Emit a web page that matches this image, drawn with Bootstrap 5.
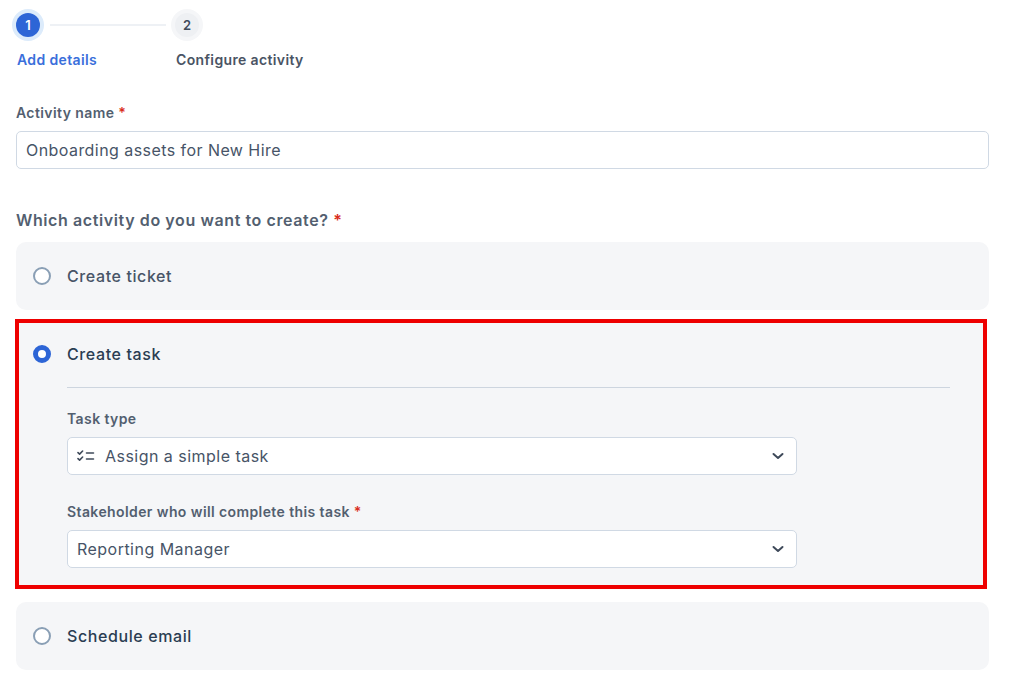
<!DOCTYPE html>
<html lang="en">
<head>
<meta charset="utf-8">
<title>Add details</title>
<link href="https://cdn.jsdelivr.net/npm/bootstrap@5.3.0/dist/css/bootstrap.min.css" rel="stylesheet">
<style>
html,body{height:690px;overflow:hidden}
body{font-family:Inter,"Liberation Sans",sans-serif;color:#475467;background:#fff}
.page-wrap{padding:9px 25px 0 16px}
.step-dot{width:24px;height:24px;border-radius:50%;font-size:13px;font-weight:600;line-height:24px;text-align:center;flex:none}
.step-on{background:#2d65d6;color:#fff;box-shadow:0 0 0 4px #dcebfb}
.step-off{background:#eef0f3;color:#3f4a5a;box-shadow:0 0 0 4px #f5f6f8}
.step-line{height:2px;width:116px;background:#eef1f5;margin:0 9px 0 10px}
.step-head{padding:4px 0 0 0}
.step-labels{margin-top:13px;font-size:14px;font-weight:600;line-height:20px;letter-spacing:.36px}
.lab-a{width:160px;color:#3a6fdb;padding-left:1px}
.lab-b{color:#4a5464}
.fld-head{padding-top:33px}
.fld-label{font-size:14px;font-weight:600;line-height:20px;color:#535f70;margin-bottom:8px;display:block;letter-spacing:.4px}
.fld-star{color:#d92d20}
.fld-input.form-control{height:38px;font-size:16px;color:#475467;border:1.5px solid #d0d9e4;border-radius:5px;padding:0 9px;font-family:inherit;letter-spacing:.44px}
.q-title{font-size:16px;font-weight:600;line-height:24px;color:#535f70;margin:39px 0 10px;letter-spacing:.6px}
.opt-box{background:#f5f6f8;border-radius:10px;height:68px;padding:0 18px;width:973px}
.opt-active{width:972px;height:270px;margin:9px 0 13px -1px;border:4px solid #ee0000;border-radius:0;background:#f5f6f8;padding:0 33px 0 15px}
.opt-radio.form-check-input{width:18px;height:18px;margin:0 16px 0 -1px;flex:none;border:2px solid #8a9fb5;background-color:#fff}
.opt-radio.form-check-input:checked{background-color:#fff;border:5px solid #2d65d6;background-image:none}
.opt-label{font-size:16px;font-weight:500;color:#475467;line-height:24px;letter-spacing:.6px}
.opt-dark{color:#2a3d52}
.opt-head{height:62px;padding-top:0;margin-bottom:2px}
.opt-rule{margin:0 0 21px 33px;border:0;border-top:1px solid #cdd5df;opacity:1}
.opt-body{margin-left:33px;width:730px}
.sel-wrap{position:relative;margin-bottom:27px}
.sel-input.form-select{height:38px;font-size:16px;color:#475467;border:1.5px solid #d0d9e4;border-radius:5px;padding:0 36px 0 9px;font-family:inherit;letter-spacing:.47px;background-size:14px 10px;background-position:right 11px center;background-image:url("data:image/svg+xml,%3csvg xmlns='http://www.w3.org/2000/svg' viewBox='0 0 14 10'%3e%3cpath fill='none' stroke='%233f4a5a' stroke-width='2' stroke-linecap='round' stroke-linejoin='round' d='M2.5 3l4.5 4 4.5-4'/%3e%3c/svg%3e")}
.sel-input.with-icon{padding-left:37px}
.sel-icon{position:absolute;left:10px;top:13px;width:18px;height:12px}
</style>
</head>
<body>
<div class="page-wrap">
  <div class="step-head d-flex align-items-center">
    <div class="step-dot step-on">1</div>
    <div class="step-line"></div>
    <div class="step-dot step-off ms-0">2</div>
  </div>
  <div class="step-labels d-flex">
    <div class="lab-a">Add details</div>
    <div class="lab-b">Configure activity</div>
  </div>

  <div class="fld-head">
    <label class="fld-label" for="nm">Activity name <span class="fld-star">*</span></label>
    <input id="nm" class="form-control fld-input" value="Onboarding assets for New Hire">
  </div>

  <div class="q-title">Which activity do you want to create? <span class="fld-star">*</span></div>

  <div class="opt-box d-flex align-items-center">
    <input class="form-check-input opt-radio" type="radio" name="act" id="r1">
    <label class="opt-label" for="r1">Create ticket</label>
  </div>

  <div class="opt-box opt-active">
    <div class="opt-head d-flex align-items-center">
      <input class="form-check-input opt-radio" type="radio" name="act" id="r2" checked>
      <label class="opt-label opt-dark" for="r2">Create task</label>
    </div>
    <hr class="opt-rule">
    <div class="opt-body">
      <label class="fld-label" for="s1">Task type</label>
      <div class="sel-wrap">
        <select id="s1" class="form-select sel-input with-icon"><option>Assign a simple task</option></select>
        <svg class="sel-icon" viewBox="0 0 18 12" fill="none" stroke="#3f4a5a" stroke-width="1.6" stroke-linecap="round" stroke-linejoin="round" aria-hidden="true"><path d="M1 2.6l1.6 1.5L5.6 1M1 8.6l1.6 1.5L5.6 7M9.5 3h7M9.5 9h7"/></svg>
      </div>
      <label class="fld-label" for="s2">Stakeholder who will complete this task <span class="fld-star">*</span></label>
      <div class="sel-wrap">
        <select id="s2" class="form-select sel-input"><option>Reporting Manager</option></select>
      </div>
    </div>
  </div>

  <div class="opt-box d-flex align-items-center">
    <input class="form-check-input opt-radio" type="radio" name="act" id="r3">
    <label class="opt-label opt-dark" for="r3">Schedule email</label>
  </div>
</div>
</body>
</html>
